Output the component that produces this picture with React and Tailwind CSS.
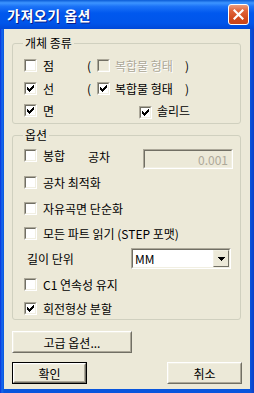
import React from "react";

const FONT = "font-['Noto_Sans_CJK_KR','Noto_Sans',sans-serif]";

// classic 13x13 sunken checkbox
function Check({ checked, disabled }) {
  return (
    <span className="inline-flex w-[13px] h-[13px] shrink-0 border border-t-[#ACA899] border-l-[#ACA899] border-b-white border-r-white">
      <span
        className={`flex w-full h-full items-center justify-center border border-t-[#716F64] border-l-[#716F64] border-b-[#F1EFE2] border-r-[#F1EFE2] ${
          disabled ? "bg-[#ECE9D8]" : "bg-white"
        }`}
      >
        {checked && (
          <svg width="7" height="7" viewBox="0 0 7 7" shapeRendering="crispEdges">
            <path d="M0 2 L2 4 L7 -1 L7 2 L2 7 L0 5 Z" fill="#000" />
          </svg>
        )}
      </span>
    </span>
  );
}

function Row({ children, className = "" }) {
  return <div className={`flex items-center h-[13px] pl-[11px] ${className}`}>{children}</div>;
}

function Label({ children, className = "" }) {
  return <span className={`leading-[13px] whitespace-nowrap ${className}`}>{children}</span>;
}

function Group({ title, className = "", children }) {
  return (
    <div className={`relative ml-[8px] w-[229px] border border-[#D0D0BF] rounded-[3px] ${className}`}>
      <span className="absolute left-[10px] -top-[8px] px-[2px] bg-[#ECE9D8] leading-[13px] text-[#000]">
        {title}
      </span>
      {children}
    </div>
  );
}

function Button({ children, isDefault, className = "" }) {
  const inner = (
    <span className="flex w-full h-full items-center justify-center border border-t-white border-l-white border-b-[#716F64] border-r-[#716F64]">
      <span className="flex w-full h-full items-center justify-center border border-t-[#F1EFE2] border-l-[#F1EFE2] border-b-[#ACA899] border-r-[#ACA899] leading-[13px]">
        {children}
      </span>
    </span>
  );
  return (
    <div className={`h-[22px] bg-[#ECE9D8] ${isDefault ? "border border-black" : ""} ${className}`}>{inner}</div>
  );
}

export default function App() {
  return (
    <div className={`w-[254px] h-[393px] flex flex-col bg-[#0550E0] text-[12px] text-black ${FONT}`}>
      {/* Title bar */}
      <div className="h-[29px] shrink-0 flex items-center justify-between pl-[7px] pr-[5px] bg-[linear-gradient(180deg,#0A5BD6_0%,#3D95FF_10%,#1C73F7_22%,#0058EE_45%,#0055EA_80%,#0048D8_100%)]">
        <span className="text-white font-bold text-[14px] leading-[16px] tracking-[0.5px] [text-shadow:1px_1px_0_#0A1E8A]">
          가져오기 옵션
        </span>
        <span className="flex w-[21px] h-[21px] items-center justify-center rounded-[3px] border border-white bg-[linear-gradient(180deg,#EC9C7E_0%,#E0653C_30%,#D24A1E_70%,#C9441A_100%)]">
          <svg width="11" height="11" viewBox="0 0 11 11">
            <path d="M1.5 1.5 L9.5 9.5 M9.5 1.5 L1.5 9.5" stroke="#fff" strokeWidth="2.2" strokeLinecap="square" />
          </svg>
        </span>
      </div>

      {/* Body */}
      <div className="flex-1 px-[4px] pb-[4px] bg-[linear-gradient(90deg,#0831D9_0,#166AEE_2px,#0855DD_4px,#0855DD_250px,#0A3FC8_100%)]">
        <div className="h-full bg-[#ECE9D8] flex flex-col">
          {/* 개체 종류 */}
          <Group title="개체 종류" className="mt-[14px] h-[81px] pt-[15px]">
            <Row>
              <span className="flex items-center w-[63px]">
                <Check />
                <Label className="ml-[6px]">점</Label>
              </span>
              <Label className="w-[10px]">(</Label>
              <Check disabled />
              <Label className="ml-[5px] w-[70px] text-[#ACA899] [text-shadow:1px_1px_0_#fff]">복합물 형태</Label>
              <Label>)</Label>
            </Row>
            <Row className="mt-[10px]">
              <span className="flex items-center w-[63px]">
                <Check checked />
                <Label className="ml-[6px]">선</Label>
              </span>
              <Label className="w-[10px]">(</Label>
              <Check checked />
              <Label className="ml-[5px] w-[70px]">복합물 형태</Label>
              <Label>)</Label>
            </Row>
            <Row className="mt-[9px]">
              <span className="flex items-center w-[63px]">
                <Check checked />
                <Label className="ml-[6px]">면</Label>
              </span>
              <span className="ml-[52px]">
                <Check checked />
              </span>
              <Label className="ml-[5px]">솔리드</Label>
            </Row>
          </Group>

          {/* 옵션 */}
          <Group title="옵션" className="mt-[11px] h-[185px] pt-[13px]">
            <div className="flex items-start h-[20px] pl-[11px]">
              <span className="flex items-start w-[64px]">
                <Check />
                <Label className="ml-[6px]">봉합</Label>
              </span>
              <Label className="w-[55px] mt-[1px]">공차</Label>
              <span className="w-[90px] h-[20px] border border-t-[#ACA899] border-l-[#ACA899] border-b-white border-r-white">
                <span className="flex w-full h-full items-center justify-end pr-[3px] border border-t-[#716F64] border-l-[#716F64] border-b-[#F1EFE2] border-r-[#F1EFE2] bg-[#ECE9D8] text-[#ACA899] leading-[13px]">
                  0.001
                </span>
              </span>
            </div>
            <Row className="mt-[7px]">
              <Check />
              <Label className="ml-[6px]">공차 최적화</Label>
            </Row>
            <Row className="mt-[13px]">
              <Check />
              <Label className="ml-[6px]">자유곡면 단순화</Label>
            </Row>
            <Row className="mt-[12px]">
              <Check />
              <Label className="ml-[6px]">모든 파트 읽기 (STEP 포맷)</Label>
            </Row>
            <div className="flex items-center h-[21px] mt-[8px] pl-[14px]">
              <Label className="w-[104px]">길이 단위</Label>
              <span className="w-[100px] h-[21px] border border-t-[#ACA899] border-l-[#ACA899] border-b-white border-r-white">
                <span className="flex w-full h-full items-center border border-t-[#716F64] border-l-[#716F64] border-b-[#F1EFE2] border-r-[#F1EFE2] bg-white">
                  <Label className="flex-1 pl-[2px]">MM</Label>
                  <span className="flex w-[16px] h-[17px] items-center justify-center bg-[#ECE9D8] border border-t-[#F1EFE2] border-l-[#F1EFE2] border-b-[#716F64] border-r-[#716F64]">
                    <svg width="7" height="4" viewBox="0 0 7 4" shapeRendering="crispEdges">
                      <path d="M0 0 H7 L3.5 4 Z" fill="#000" />
                    </svg>
                  </span>
                </span>
              </span>
            </div>
            <Row className="mt-[9px]">
              <Check />
              <Label className="ml-[6px]">C1 연속성 유지</Label>
            </Row>
            <Row className="mt-[11px]">
              <Check checked />
              <Label className="ml-[6px]">회전형상 분할</Label>
            </Row>
          </Group>

          <Button className="mt-[11px] ml-[8px] w-[120px]">고급 옵션...</Button>

          <div className="flex justify-between px-[8px] mt-[9px]">
            <Button isDefault className="w-[75px]">확인</Button>
            <Button className="w-[75px]">취소</Button>
          </div>
        </div>
      </div>
    </div>
  );
}
